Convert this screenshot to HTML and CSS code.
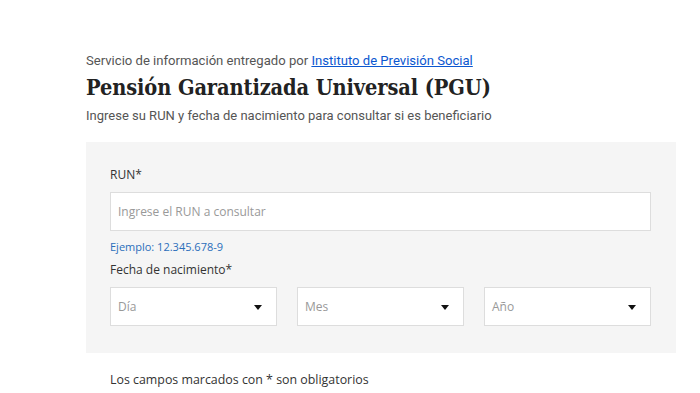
FILE: index.html
```html
<!DOCTYPE html>
<html lang="es">
<head>
<meta charset="utf-8">
<link rel="stylesheet" href="styles.css">
</head>
<body>
<main class="page">
  <p class="source">Servicio de información entregado por <a href="#" class="link">Instituto de Previsión Social</a></p>
  <h1 class="title">Pensión Garantizada Universal (PGU)</h1>
  <p class="lead">Ingrese su RUN y fecha de nacimiento para consultar si es beneficiario</p>

  <section class="panel">
    <label class="label label-run">RUN*</label>
    <div class="input"><span class="placeholder">Ingrese el RUN a consultar</span></div>
    <p class="hint">Ejemplo: 12.345.678-9</p>
    <label class="label label-date">Fecha de nacimiento*</label>
    <div class="selects">
      <div class="select"><span class="placeholder">Día</span><span class="caret"></span></div>
      <div class="select"><span class="placeholder">Mes</span><span class="caret"></span></div>
      <div class="select"><span class="placeholder">Año</span><span class="caret"></span></div>
    </div>
  </section>

  <p class="note">Los campos marcados con * son obligatorios</p>
</main>
</body>
</html>
```

FILE: styles.css
```css
* { box-sizing: border-box; }
html, body { margin: 0; padding: 0; background: #fff; }
body { font-family: Roboto, "Open Sans", sans-serif; color: #333; }

.page {
  padding: 52px 24px 0 86px;
}

.source {
  margin: 0;
  font-size: 13.1px;
  line-height: 17px;
  color: #555;
}
.link { color: #0b57d0; text-decoration: underline; }

.title {
  margin: 4px 0 0;
  font-family: "DejaVu Serif Condensed", "DejaVu Serif", serif;
  font-stretch: condensed;
  font-weight: bold;
  font-size: 21.6px;
  line-height: 30px;
  color: #222;
  letter-spacing: -0.1px;
}

.lead {
  margin: 4px 0 0;
  font-size: 13px;
  line-height: 17px;
  color: #555;
}

.panel {
  margin-top: 18px;
  width: 590px;
  background: #f5f5f5;
  padding: 25px 25px 27px 24px;
  font-family: "Open Sans", sans-serif;
}

.label {
  display: block;
  font-size: 12px;
  line-height: 16px;
  color: #333;
}

.input {
  margin-top: 9px;
  height: 39px;
  background: #fff;
  border: 1px solid #ddd;
  display: flex;
  align-items: center;
  padding-left: 7px;
}

.placeholder {
  font-size: 12px;
  color: #999;
}

.hint {
  margin: 9px 0 0;
  font-size: 11px;
  line-height: 14px;
  color: #2a6ebb;
}

.label-date { margin-top: 8px; }

.selects {
  margin-top: 9px;
  display: grid;
  grid-template-columns: repeat(3, 1fr);
  gap: 20px;
}

.select {
  height: 39px;
  background: #fff;
  border: 1px solid #ddd;
  display: flex;
  align-items: center;
  justify-content: space-between;
  padding: 0 14px 0 7px;
}

.caret {
  width: 0; height: 0;
  border-left: 4px solid transparent;
  border-right: 4px solid transparent;
  border-top: 5px solid #111;
  margin-top: 2px;
}

.note {
  margin: 19px 0 0 24px;
  font-family: "Open Sans", sans-serif;
  font-size: 12.4px;
  line-height: 16px;
  color: #333;
}
```
